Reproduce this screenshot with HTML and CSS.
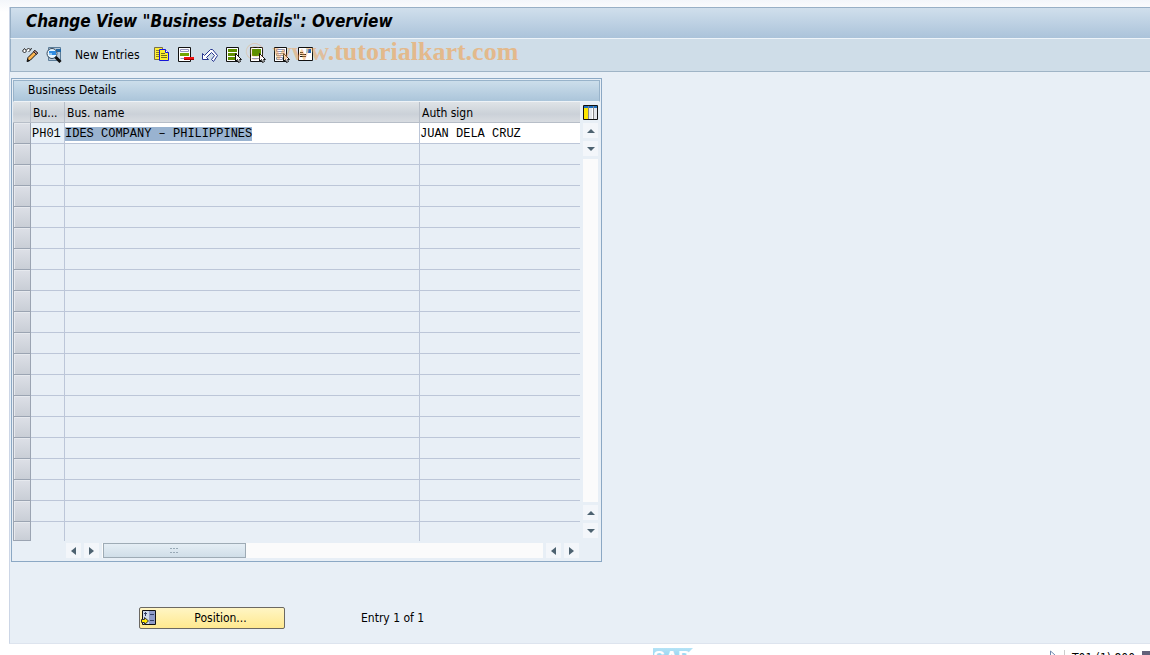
FILE: index.html
```html
<!DOCTYPE html>
<html lang="en">
<head>
    <meta charset="UTF-8">
    <meta name="viewport" content="width=device-width, initial-scale=1.0">
    <title>Change View "Business Details": Overview</title>
    <link rel="stylesheet" href="styles.css">
</head>
<body>
<main class="window">
    <h1 class="title">Change View "Business Details": Overview</h1>

    <div class="toolbar">
        <button class="tool" aria-label="Display / Change">
            <svg width="16" height="16" viewBox="0 0 16 16">
                <path d="M.500 4l2-2.500 2 2.500-2 2zM4.500 3l2-2 2 2-2 2" fill="#fff" stroke="#222"/>
                <path d="M8 2.500l2-1" stroke="#222"/>
                <path d="M5 14.500l1-4 7-7 2.500 2.500-7 7z" fill="#ffb64f" stroke="#111"/>
                <path d="M11.500 4.500l3 3 1-1.500-2.500-2.500z" fill="#e0a0a0" stroke="#222"/>
                <path d="M5 15l1-3 2 2z" fill="#111"/>
            </svg>
        </button>
        <button class="tool" aria-label="Details">
            <svg width="16" height="16" viewBox="0 0 16 16">
                <path d="M2.500.5h12v13h-12z" fill="#b8c9d9" stroke="#5b7c98"/>
                <path d="M10 2h5v3h-5z" fill="#2468a4"/>
                <circle cx="6" cy="6.500" r="5" fill="#e8f6ff" stroke="#34485c"/>
                <path d="M3 4h7v4H3z" fill="#2f8be0"/>
                <path d="M3 6h3v2H3z" fill="#8cc4f4"/>
                <path d="M9.500 10l5 5" stroke="#111" stroke-width="3"/>
            </svg>
        </button>
        <button class="tool-text">New Entries</button>
        <button class="tool" aria-label="Copy As...">
            <svg width="16" height="16" viewBox="0 0 16 16">
                <path d="M.5.5h8v12h-8z" fill="#ffee35" stroke="#77704b"/>
                <path d="M2 3.500h4M2 5.500h4M2 7.500h4M2 9.500h4" stroke="#8d8020"/>
                <path d="M5.500 2.500h6l3 3v8h-9z" fill="#fff12e" stroke="#1616d8"/>
                <path d="M11.500 2.500v3h3" fill="#fff" stroke="#1616d8"/>
                <path d="M7 6.500h4M7 8.500h6M7 10.500h6" stroke="#77701c"/>
            </svg>
        </button>
        <button class="tool" aria-label="Delete">
            <svg width="16" height="16" viewBox="0 0 16 16">
                <path d="M.5.5h12v14H.5z" fill="#fff" stroke="#111"/>
                <path d="M2.500 2.500h8v2h-8zM2.500 11.500h8" fill="#fff" stroke="#9797bd"/>
                <path d="M2 6h9v3H2z" fill="#72a600"/>
                <path d="M6 10h10v3H6z" fill="#f01010"/>
                <path d="M6 12.500h10" stroke="#a00000"/>
            </svg>
        </button>
        <button class="tool" aria-label="Undo Change">
            <svg width="16" height="16" viewBox="0 0 16 16">
                <path d="M.5 6.500v6h6l-2-2 5-5 3 3-3 4 2 2 4-6-5-6h-2l-6 6z" fill="#fff" stroke="#26358f"/>
            </svg>
        </button>
        <button class="tool" aria-label="Select All">
            <svg width="16" height="16" viewBox="0 0 16 16">
                <path d="M.5.5h12v14H.5z" fill="#fff" stroke="#111"/>
                <path d="M2 2h9v3H2zM2 6h9v3H2zM2 10h9v3H2z" fill="#5f8f00"/>
                <path d="M9.500 6.500v8l2-2 1 3 2-1-1-2h2z" fill="#fff" stroke="#111"/>
            </svg>
        </button>
        <button class="tool" aria-label="Select Block">
            <svg width="16" height="16" viewBox="0 0 16 16">
                <path d="M.5.5h12v14H.5z" fill="#fff" stroke="#111"/>
                <path d="M2 2h9v7H2z" fill="#5f8f00"/>
                <path d="M2 11.500h7" stroke="#9797bd"/>
                <path d="M9.500 6.500v8l2-2 1 3 2-1-1-2h2z" fill="#fff" stroke="#111"/>
            </svg>
        </button>
        <button class="tool" aria-label="Deselect All">
            <svg width="16" height="16" viewBox="0 0 16 16">
                <path d="M.5.5h12v14H.5z" fill="#fff" stroke="#111"/>
                <path d="M2.500 2.500h8v2h-8zM2.500 6.500h8v2h-8zM2.500 10.500h6v2h-6z" fill="#fff" stroke="#8a94b4"/>
                <path d="M9.500 6.500v8l2-2 1 3 2-1-1-2h2z" fill="#fff" stroke="#111"/>
            </svg>
        </button>
        <button class="tool" aria-label="Print Field List">
            <svg width="16" height="16" viewBox="0 0 16 16">
                <path d="M.5.5h14v13H.5z" fill="#fff" stroke="#111"/>
                <path d="M2 5.500h3M2 7.500h6M2 9.500h6" stroke="#111"/>
                <path d="M8 2h5v4H8z" fill="#2064b0"/>
                <path d="M8 2h2v4H8z" fill="#a9cdf0"/>
            </svg>
        </button>
        <div class="watermark"><span class="mark-c">©</span><span class="mark-w">www</span>.tutorialkart.com</div>
    </div>

    <section class="panel">
        <h2 class="panel-title">Business Details</h2>
        <div class="panel-body">
            <div class="table-side">
                <table class="grid">
                    <colgroup>
                        <col class="col-select">
                        <col class="col-code">
                        <col class="col-name">
                        <col class="col-sign">
                    </colgroup>
                    <thead>
                        <tr><th></th><th>Bu...</th><th>Bus. name</th><th>Auth sign</th></tr>
                    </thead>
                    <tbody id="rows">
                        <tr class="filled"><td></td><td>PH01</td><td><span class="selected">IDES COMPANY – PHILIPPINES</span></td><td>JUAN DELA CRUZ</td></tr>
                    </tbody>
                </table>
                <div class="hscroll">
                    <button class="arrow left" aria-label="Scroll left"></button>
                    <button class="arrow right" aria-label="Scroll right"></button>
                    <div class="track">
                        <div class="thumb">
                            <svg width="9" height="6" viewBox="0 0 9 6"><path d="M0 .5h2M3 .5h2M6 .5h2M0 4.500h2M3 4.500h2M6 4.500h2" stroke="#98a9b6"/></svg>
                        </div>
                    </div>
                    <button class="arrow left" aria-label="Page left"></button>
                    <button class="arrow right" aria-label="Page right"></button>
                </div>
            </div>
            <div class="vscroll">
                <button class="config" aria-label="Table settings">
                    <svg width="15" height="15" viewBox="0 0 15 15">
                        <path d="M.5.5h14v14H.5z" fill="#fff" stroke="#111"/>
                        <path d="M1 1h13v2H1z" fill="#1c6fc0"/>
                        <path d="M1 3h4v11H1z" fill="#ffe600"/>
                        <path d="M6 3h3v11H6zM11 3h3v11h-3z" fill="#e4e6ea"/>
                        <path d="M5.500 1v13M10.500 1v13" stroke="#888"/>
                    </svg>
                </button>
                <button class="arrow up" aria-label="Scroll up"></button>
                <button class="arrow down" aria-label="Scroll down"></button>
                <div class="vtrack"></div>
                <button class="arrow up" aria-label="Page up"></button>
                <button class="arrow down" aria-label="Page down"></button>
            </div>
        </div>
    </section>

    <div class="actions">
        <button class="position">
            <svg width="16" height="16" viewBox="0 0 16 16">
                <path d="M1.500.5h13v14h-13z" fill="#cfdbed" stroke="#111"/>
                <path d="M8 1h6v13H8z" fill="#8f9bc8"/>
                <path d="M3 3.500h3M4.500 2v4M9 4.500h4M9 10.500h4" stroke="#333f66"/>
                <path d="M.5 9.500h3v-2l4 3.500-4 3.500v-2h-3z" fill="#ffe800" stroke="#333"/>
            </svg>
            <span>Position...</span>
        </button>
        <span>Entry 1 of 1</span>
    </div>
</main>

<footer class="status">
    <svg class="logo" width="40" height="20" viewBox="0 0 40 20">
        <defs>
            <linearGradient id="sap" x1="0" y1="0" x2="0" y2="1">
                <stop offset="0" stop-color="#b5e3f6"/>
                <stop offset="1" stop-color="#6fc4ea"/>
            </linearGradient>
        </defs>
        <path d="M0 0h40L20 20H0z" fill="url(#sap)"/>
        <text x="0" y="16" class="logo-text">SAP</text>
    </svg>
    <div class="session">
        <svg width="8" height="12" viewBox="0 0 8 12"><path d="M1.500 1v9l5-4.500z" fill="#fff" stroke="#6d87ae"/></svg>
        <span class="system">T01 (1) 800</span>
        <svg width="8" height="10" viewBox="0 0 8 10"><path d="M0 1h8v9H0z" fill="#62627a"/></svg>
    </div>
</footer>

<script>
    // pad the table control with empty lines
    const rows = document.getElementById('rows');
    for (let i = 0; i < 19; i++) {
        const tr = document.createElement('tr');
        tr.innerHTML = '<td></td><td></td><td></td><td></td>';
        rows.appendChild(tr);
    }
</script>
</body>
</html>
```
FILE: styles.css
```css
* {
    box-sizing: border-box;
}

body {
    margin: 0;
    height: 100vh;
    overflow: hidden;
    display: flex;
    flex-direction: column;
    padding-top: 7px;
    background: linear-gradient(#f3f6fa, #fff 12px);
    font: 12px/16px "DejaVu Sans Condensed", "DejaVu Sans", sans-serif;
    color: #000;
}

button {
    font: inherit;
    color: inherit;
    border: 0;
    padding: 0;
    background: none;
}

svg {
    display: block;
}

.window {
    flex: 1;
    margin-left: 9px;
    border-left: 1px solid #ccd6e6;
    border-bottom: 1px solid #dde4ee;
    background: #e8eff6;
}

.title {
    margin: 0;
    height: 31px;
    padding: 0 15px;
    border-top: 1px solid #98b0c6;
    border-left: 1px solid #98b0c6;
    background: linear-gradient(#d0dfec, #abc3da);
    font-size: 17px;
    line-height: 27px;
    font-style: italic;
    font-weight: bold;
}

.toolbar {
    position: relative;
    display: flex;
    align-items: center;
    gap: 8px;
    height: 34px;
    padding: 0 11px;
    border-top: 1px solid #eef4f9;
    border-left: 1px solid #98b0c6;
    border-bottom: 1px solid #9fb4c6;
    background: #cfdde8;
}

.tool-text {
    margin: 0 6px 0 5px;
}

.watermark {
    position: absolute;
    left: 234px;
    top: 0;
    font: bold 26px/26px "Liberation Serif", serif;
    color: #e3b98c;
    pointer-events: none;
}

.mark-c {
    margin-right: 8px;
    font-weight: normal;
    color: rgba(240, 160, 90, 0.35);
}

.mark-w {
    color: rgba(240, 160, 80, 0.5);
}

.panel {
    width: fit-content;
    margin: 6px 0 0 1px;
    border: 1px solid #8ba8c4;
}

.panel-title {
    margin: 1px 1px 0;
    height: 22px;
    padding-left: 14px;
    border: 1px solid #98b3ca;
    border-bottom-color: #eef3f7;
    background: linear-gradient(#ccdeeb, #abc5da);
    font-size: 12px;
    line-height: 18px;
    font-weight: normal;
}

.panel-body {
    display: flex;
    padding: 0 2px 3px 1px;
}

.grid {
    table-layout: fixed;
    width: 567px;
    border-collapse: separate;
    border-spacing: 0;
}

.col-select { width: 18px; }
.col-code { width: 34px; }
.col-name { width: 355px; }
.col-sign { width: 160px; }

.grid th,
.grid td {
    height: 21px;
    padding: 0;
    border-right: 1px solid #bcc6d8;
    border-bottom: 1px solid #bcc6d8;
    text-align: left;
    font-weight: normal;
    white-space: nowrap;
}

.grid th {
    padding: 2px 0 0 2px;
    border-color: #b7bec8;
    background: linear-gradient(#dfe3e7, #cbd1d8 60%, #d8dce1);
    line-height: 18px;
}

.grid td {
    padding-top: 2px;
    font: 12px/16px "Liberation Mono", monospace;
}

.grid th:last-child,
.grid td:last-child {
    border-right: 0;
}

.grid td:first-child {
    border: 1px solid #9ba4b2;
    border-top: 0;
    background: linear-gradient(#dde0e7, #c9ced6);
    box-shadow: inset 1px 1px #e6e9ee;
}

.grid tr:last-child td {
    height: 19px;
}

.grid tr:last-child td:not(:first-child) {
    border-bottom: 0;
}

.filled td {
    background: #fff;
}

.filled td:nth-child(2) {
    padding-left: 1px;
    background: #e8f0f8;
}

.selected {
    background: #99b3d0;
}

.hscroll {
    display: flex;
    gap: 3px;
    margin: 2px 1px 0 53px;
}

.arrow {
    width: 15px;
    height: 15px;
    background: #f3f6fa;
    display: flex;
    align-items: center;
    justify-content: center;
}

.arrow::before {
    content: "";
    border: 4px solid transparent;
}

.up::before {
    border-top: 0;
    border-bottom: 4px solid #4d6270;
}

.down::before {
    border-bottom: 0;
    border-top: 4px solid #4d6270;
}

.left::before {
    border-left: 0;
    border-right: 5px solid #4d6270;
}

.right::before {
    border-right: 0;
    border-left: 5px solid #4d6270;
}

.track {
    flex: 1;
    height: 15px;
    padding-left: 1px;
    background: #fbfbfb;
}

.thumb {
    display: flex;
    align-items: center;
    justify-content: center;
    width: 143px;
    height: 15px;
    border: 1px solid #9eabb5;
    background: linear-gradient(#e5eef5, #d0dee8);
}

.vscroll {
    display: flex;
    flex-direction: column;
    align-items: flex-start;
    gap: 3px;
    width: 19px;
    padding: 2px 0 20px 3px;
}

.config {
    height: 16px;
}

.vtrack {
    flex: 1;
    width: 15px;
    background: #fbfbfb;
}

.actions {
    display: flex;
    align-items: center;
    gap: 76px;
    margin: 45px 0 0 129px;
}

.position {
    display: flex;
    align-items: center;
    width: 146px;
    height: 22px;
    padding-left: 1px;
    border: 1px solid #6b6862;
    border-radius: 2px;
    background: linear-gradient(#fff5c4, #ffe98f);
}

.position span {
    flex: 1;
}

.status {
    display: flex;
    justify-content: space-between;
    align-items: flex-start;
    height: 11px;
    padding: 4px 0 0 653px;
    overflow: hidden;
    background: #fff;
}

.logo-text {
    font: bold 18px "Liberation Sans", sans-serif;
    fill: #fff;
}

.session {
    display: flex;
    gap: 7px;
    padding-top: 2px;
}

.system {
    padding-left: 7px;
    border-left: 1px solid #ccc;
}
```
